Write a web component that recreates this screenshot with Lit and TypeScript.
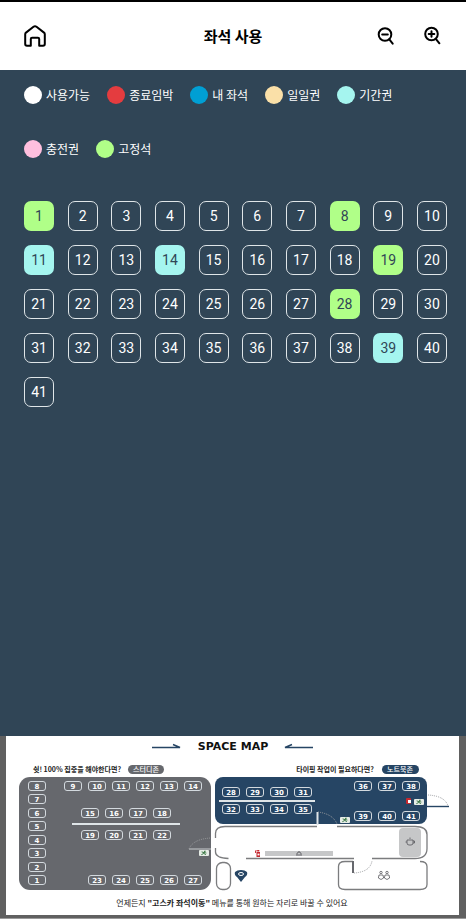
import { LitElement, css, html, svg } from "lit";
import { customElement, property } from "lit/decorators.js";

type Status = "free" | "ending" | "mine" | "day" | "period" | "charge" | "fixed";

const LEGEND: { status: Status; label: string }[] = [
  { status: "free", label: "사용가능" },
  { status: "ending", label: "종료임박" },
  { status: "mine", label: "내 좌석" },
  { status: "day", label: "일일권" },
  { status: "period", label: "기간권" },
  { status: "charge", label: "충전권" },
  { status: "fixed", label: "고정석" },
];

const TAKEN: Record<number, Status> = {
  1: "fixed",
  8: "fixed",
  11: "period",
  14: "period",
  19: "fixed",
  28: "fixed",
  39: "period",
};

const SEAT_COUNT = 41;

/* Runs of seats on the floor plan: first centre, step and seat numbers. */
const RUNS: { x: number; y: number; dx: number; seats: number[] }[] = [
  { x: 73, y: 50, dx: 24, seats: [9, 10, 11, 12, 13, 14] },
  { x: 90, y: 77, dx: 24, seats: [15, 16, 17, 18] },
  { x: 90, y: 99, dx: 24, seats: [19, 20, 21, 22] },
  { x: 97, y: 144, dx: 24, seats: [23, 24, 25, 26, 27] },
  { x: 231, y: 56, dx: 24, seats: [28, 29, 30, 31] },
  { x: 231, y: 73, dx: 24, seats: [32, 33, 34, 35] },
  { x: 363, y: 50, dx: 24, seats: [36, 37, 38] },
  { x: 363, y: 80, dx: 24, seats: [39, 40, 41] },
];

const COLUMN_Y = [144, 131, 117, 104, 90, 77, 63, 50];

@customElement("space-map")
export class SpaceMap extends LitElement {
  static styles = css`
    :host {
      display: block;
    }
    svg {
      display: block;
      width: 100%;
      height: auto;
      font-family: "DejaVu Sans", "Noto Sans CJK KR", sans-serif;
    }
    text {
      text-anchor: middle;
    }
    .frame { fill: #606060; }
    .edge { fill: #9a9a9a; }
    .paper { fill: #fff; }
    .study { fill: #66686d; }
    .note { fill: #264564; }
    .seat { fill: none; stroke: #d3d9de; stroke-width: 1; }
    .num { fill: #fff; font-size: 7px; font-weight: 700; }
    .title { fill: #111; font-size: 11px; font-weight: 700; }
    .caption { fill: #222; font-size: 8px; font-family: "Noto Sans CJK KR", sans-serif; }
    .ask { fill: #222; font-size: 7px; font-weight: 700; font-family: "Noto Sans CJK KR", sans-serif; }
    .strong { font-weight: 700; }
    .tag { fill: #fff; font-size: 7px; font-weight: 500; font-family: "Noto Sans CJK KR", sans-serif; }
    .desk { fill: none; stroke: #dfe5e8; stroke-width: 2; }
    .wall { fill: none; stroke: #7b7c7e; stroke-width: 1.3; }
    .thick { fill: none; stroke: #66686d; stroke-width: 2; }
    .leaf { fill: none; stroke: #c9cdd0; stroke-width: 1; }
    .swing { fill: none; stroke: #9b9da0; stroke-width: 1; stroke-dasharray: 1 1; }
    .arrow { fill: none; stroke: #264564; stroke-width: 1.4; }
    .grey { fill: #c6c7c8; }
    .line { fill: none; stroke: #55565a; stroke-width: 0.8; }
    .sign { fill: #e6ece6; }
    .runner { fill: none; stroke: #3d7a48; stroke-width: 1; stroke-linecap: round; }
    .red { fill: #c5282f; }
  `;

  private seat(x: number, y: number, n: number) {
    return svg`
      <rect class="seat" x=${x - 8.5} y=${y - 4.5} width="17" height="9" rx="2.5"></rect>
      <text class="num" x=${x} y=${y + 2.5}>${n}</text>`;
  }

  private exit(x: number, y: number) {
    return svg`
      <rect class="sign" x=${x} y=${y} width="10" height="6" rx="1"></rect>
      <path class="runner" d="M${x + 3} ${y + 2}l2 0.6 2 0.4M${x + 5.5} ${y + 1.5}l-0.8 2-2 1M${x + 5} ${y + 3.5}l1.5 1"></path>
      <circle cx=${x + 6} cy=${y + 1.3} r="0.7" fill="#3d7a48"></circle>`;
  }

  private extinguisher(x: number, y: number) {
    return svg`
      <path class="red" d="M${x + 1.5} ${y + 2}h3.5v5h-3.5zM${x + 2.3} ${y}h2v1.4h-2zM${x} ${y + 0.4}l2.5-0.4v1l-1.6 0.3v1.7h-0.9z"></path>
      <rect x=${x + 2.5} y=${y + 3.6} width="2" height="1.8" fill="#fff"></rect>`;
  }

  render() {
    return html`
      <svg viewBox="0 0 466 183" role="img" aria-label="SPACE MAP">
        <rect class="frame" width="466" height="183"></rect>
        <rect class="edge" y="182" width="466" height="1"></rect>
        <rect class="paper" x="6" width="453" height="179"></rect>

        <path class="arrow" d="M152 11.5h28l-7-3"></path>
        <path class="arrow" d="M313 11.5h-28l7-3"></path>
        <text class="title" x="233" y="14">SPACE MAP</text>

        <text class="ask" x="77" y="36">쉿! 100% 집중을 해야한다면?</text>
        <rect class="study" x="128" y="29" width="36" height="9" rx="4.500"></rect>
        <text class="tag" x="146" y="36">스터디존</text>
        <text class="ask" x="335" y="36">타이핑 작업이 필요하다면?</text>
        <rect class="note" x="382" y="29" width="37" height="9" rx="4.500"></rect>
        <text class="tag" x="400" y="36">노트북존</text>

        <rect class="study" x="19" y="41" width="192" height="113" rx="11"></rect>
        <rect class="note" x="215" y="41" width="212" height="47" rx="8"></rect>
        <path class="desk" d="M72 88h108M219 65h96"></path>
        ${COLUMN_Y.map((y, i) => this.seat(37, y, i + 1))}
        ${RUNS.map((r) => r.seats.map((n, i) => this.seat(r.x + i * r.dx, r.y, n)))}

        <path class="leaf" d="M189 113h22"></path>
        <path class="swing" d="M189 113q4-10 22-11"></path>
        ${this.exit(199, 114)}

        <rect class="red" x="406" y="62" width="5" height="6" rx="1"></rect>
        <rect x="408" y="64" width="3" height="3" fill="#fff"></rect>
        ${this.exit(414, 63)}
        <path class="arrow" d="M427 70.5h22"></path>
        <path class="swing" d="M428 59q17 1 20 11"></path>

        <path class="desk" d="M317.500 76v13"></path>
        <path class="swing" d="M318 76q15 2 19 12"></path>
        ${this.exit(340, 81)}

        <path class="wall" d="M317 90.500H225q-9.500 0-9.500 7V102M215.500 112v4q0 6 13 6.500M246 122.500h108"></path>
        <path class="wall" d="M337 90.500h78q12 0 12 8v14q0 10-12 10H372"></path>
        <rect class="wall" x="216.500" y="126.500" width="14" height="27" rx="6"></rect>
        <path class="wall" d="M353 125.500h-8q-6.500 0-6.500 5v18q0 5 6.500 5h75q7 0 7-5v-18q0-5-7-5"></path>
        <path class="thick" d="M353 125v12"></path>
        <path class="swing" d="M354 137q16-1 18-12"></path>

        <path class="note" d="M241 146l-4-5q-3-2-2-5 2-2 6-2t6 2q1 3-2 5z"></path>
        <ellipse cx="241" cy="138" rx="2.500" ry="1.500" fill="none" stroke="#fff"></ellipse>
        ${this.extinguisher(255, 114)}
        <rect class="grey" x="265" y="115" width="68" height="5"></rect>
        <path class="line" d="M296 119h6M297 118.500v-1.500q2-2 4 0v1.500M299 116v-1"></path>

        <rect class="grey" x="399" y="92" width="22" height="29" rx="4"></rect>
        <path class="line" d="M407 104h6v3q0 2-2 2h-2q-2 0-2-2zM413 105h1.500v2H413M407 106h-1.500M410 103v-1.500"></path>

        <g class="line">
          <circle cx="381" cy="136.500" r="1.200"></circle>
          <circle cx="387" cy="136.500" r="1.200"></circle>
          <path d="M379 139h4l0.600 3q-2.600 3-5.200 0zM385 139h4l0.600 3q-2.600 3-5.200 0z"></path>
        </g>

        <text class="caption" x="232" y="170">언제든지 <tspan class="strong">"고스카 좌석이동"</tspan> 메뉴를 통해 원하는 자리로 바꿀 수 있어요</text>
      </svg>
    `;
  }
}

@customElement("app-root")
export class AppRoot extends LitElement {
  @property({ type: Number }) count = SEAT_COUNT;

  static styles = css`
    :host {
      display: flex;
      flex-direction: column;
      min-height: 100vh;
      box-sizing: border-box;
      border-top: 2px solid #000;
      background: #304556;
      color: #fff;
      font-family: "Noto Sans CJK KR", sans-serif;
    }
    button {
      padding: 0;
      border: 0;
      background: none;
      color: inherit;
      font: inherit;
      cursor: pointer;
    }
    header {
      display: grid;
      grid-template-columns: 1fr auto 1fr;
      align-items: center;
      height: 68px;
      padding: 0 24px;
      background: #fff;
      color: #000;
    }
    h1 {
      margin: 0;
      font-size: 15px;
      line-height: 24px;
      font-weight: 700;
    }
    .icon {
      display: block;
      width: 22px;
      height: 22px;
    }
    .icon svg {
      display: block;
      fill: none;
      stroke: #000;
      stroke-width: 2;
      stroke-linecap: round;
      stroke-linejoin: round;
    }
    .tools {
      display: flex;
      justify-content: flex-end;
      gap: 24px;
    }
    .legend {
      display: flex;
      flex-wrap: wrap;
      gap: 36px 17px;
      margin: 0;
      padding: 16px 24px 0;
      list-style: none;
      font-size: 12px;
      line-height: 18px;
    }
    .legend li {
      display: flex;
      align-items: center;
      gap: 4px;
    }
    .dot {
      width: 18px;
      height: 18px;
      border-radius: 50%;
    }
    .dot.free { background: #fff; }
    .ending { background: #e43c3f; }
    .mine { background: #009fd4; }
    .day { background: #fae0a8; }
    .period { background: #a5f5ef; }
    .charge { background: #ffbfde; }
    .fixed { background: #b0ff88; }
    .seats {
      display: grid;
      grid-template-columns: repeat(10, 30px);
      justify-content: space-between;
      row-gap: 14px;
      padding: 43px 19px 40px 24px;
      font-family: Roboto, sans-serif;
      font-size: 14px;
    }
    .seats button {
      box-sizing: border-box;
      height: 30px;
      border-radius: 7px;
    }
    .seats .free {
      border: 1px solid #dfe5e8;
    }
    .seats .period,
    .seats .fixed {
      color: #304556;
    }
    space-map {
      margin-top: auto;
    }
  `;

  render() {
    const seats = Array.from({ length: this.count }, (_, i) => i + 1);
    return html`
      <header>
        <button class="icon" aria-label="홈">
          <svg width="22" height="22" viewBox="0 0 22 22">
            <path d="M1.200 9.300Q1.200 8.300 2 7.600L9.500 1.700Q11 0.600 12.500 1.700L20 7.600Q20.800 8.300 20.800 9.300V19Q20.800 20.800 19 20.800H15.200V14Q15.200 12.700 13.900 12.700H8.100Q6.800 12.700 6.800 14V20.800H3Q1.200 20.800 1.200 19Z"></path>
          </svg>
        </button>
        <h1>좌석 사용</h1>
        <div class="tools">
          <button class="icon" aria-label="축소">
            <svg width="22" height="22" viewBox="0 0 22 22">
              <circle cx="11" cy="9.500" r="6.300"></circle>
              <path d="M8.200 9.500h5.600M15.300 14.300l3.400 4.300"></path>
            </svg>
          </button>
          <button class="icon" aria-label="확대">
            <svg width="22" height="22" viewBox="0 0 22 22">
              <circle cx="11.500" cy="9" r="6.300"></circle>
              <path d="M8.700 9h5.600M11.500 6.200v5.600M15.800 13.800l3.600 4.500"></path>
            </svg>
          </button>
        </div>
      </header>
      <ul class="legend">
        ${LEGEND.map((l) => html`<li><span class="dot ${l.status}"></span>${l.label}</li>`)}
      </ul>
      <div class="seats">
        ${seats.map((n) => html`<button class=${TAKEN[n] ?? "free"}>${n}</button>`)}
      </div>
      <space-map></space-map>
    `;
  }
}
